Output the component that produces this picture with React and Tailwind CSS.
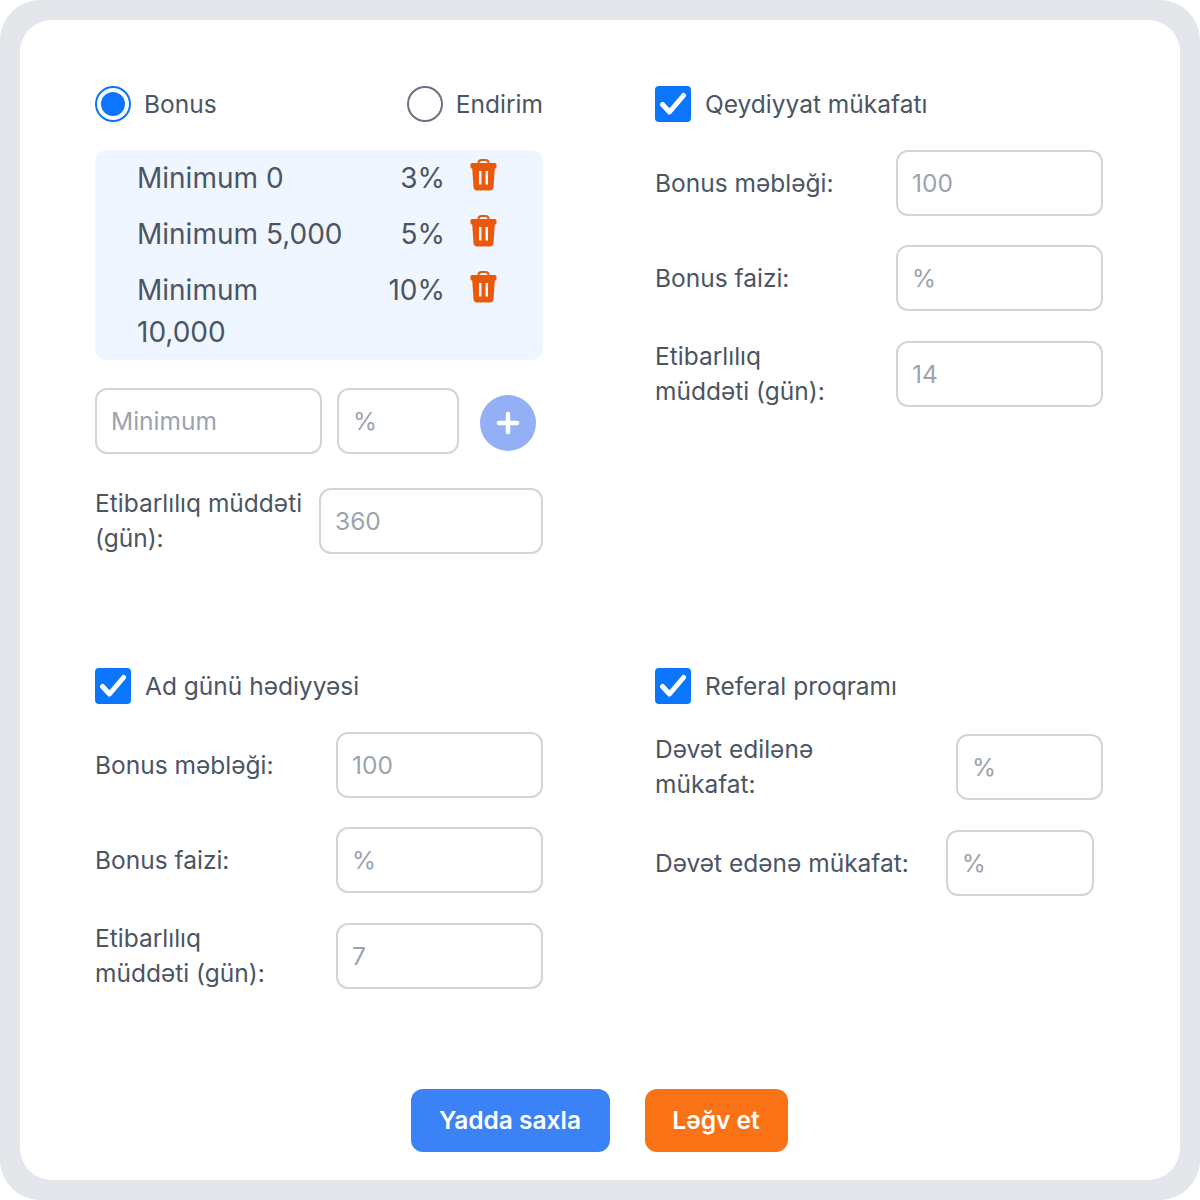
import React from 'react';

const TextInput = ({ placeholder, className = '' }) => (
  <input
    placeholder={placeholder}
    readOnly
    className={`h-[66px] shrink-0 rounded-[12px] border-2 border-[#d1d5db] bg-white pl-[14px] text-[24.5px] outline-none placeholder:text-[#9ca3af] ${className}`}
  />
);

const Checkbox = ({ label }) => (
  <label className="flex h-9 items-center gap-[14px]">
    <span className="flex h-9 w-9 items-center justify-center rounded-[4px] bg-[#0b76fb]">
      <svg width="28" height="26" viewBox="0 0 28 26" fill="none">
        <path d="M3.5 13.5 L10.5 21 L24.5 4.5" stroke="white" strokeWidth="5" strokeLinecap="round" strokeLinejoin="round" />
      </svg>
    </span>
    <span className="text-[24.5px] text-[#4b5563]">{label}</span>
  </label>
);

const Radio = ({ label, checked }) => (
  <label className="flex h-9 items-center gap-[13px]">
    {checked ? (
      <span className="flex h-9 w-9 items-center justify-center rounded-full border-2 border-[#0b76fb]">
        <span className="h-[24px] w-[24px] rounded-full bg-[#0b76fb]"></span>
      </span>
    ) : (
      <span className="h-9 w-9 rounded-full border-2 border-[#6b7280]"></span>
    )}
    <span className="text-[24.5px] text-[#4b5563]">{label}</span>
  </label>
);

const TrashIcon = () => (
  <svg width="27" height="32" viewBox="0 0 27 32" className="shrink-0">
    <path d="M8.5 5 V4 Q8.5 1 11.5 1 H15.5 Q18.5 1 18.5 4 V5" fill="none" stroke="#ea580c" strokeWidth="2" />
    <path
      fillRule="evenodd"
      fill="#ea580c"
      d="M2 4 H25 Q26.5 4 26.5 5.5 V8 Q26.5 9.5 25 9.5 H24.8 L23.5 28 Q23.2 31.5 19.8 31.5 H7.2 Q3.8 31.5 3.5 28 L2.2 9.5 H2 Q0.5 9.5 0.5 8 V5.5 Q0.5 4 2 4 Z M9 12 V25.5 H11.5 V12 Z M15.5 12 V25.5 H18 V12 Z"
    />
  </svg>
);

const TierRow = ({ min, percent }) => (
  <div className="flex items-start">
    <div className="w-[240px] shrink-0 text-[28px] leading-[42px] text-[#4b5563]">{min}</div>
    <div className="w-[68px] shrink-0 text-right text-[28px] leading-[42px] text-[#4b5563]">{percent}</div>
    <div className="ml-[25px] mt-[2px]">
      <TrashIcon />
    </div>
  </div>
);

const Field = ({ label, placeholder, inputClass, className = '' }) => (
  <div className={`flex items-center justify-between ${className}`}>
    <span className="text-[24.5px] leading-[35px] text-[#4b5563]">{label}</span>
    <TextInput placeholder={placeholder} className={inputClass} />
  </div>
);

export default function App() {
  return (
    <div className="h-[1200px] w-[1200px] rounded-[40px] bg-[#e3e7ec] p-5 font-['Inter',sans-serif]">
      <div className="flex h-[1160px] flex-col rounded-[32px] bg-white pl-[75px] pr-[77px] pt-[66px]">
        <div className="grid grid-cols-[448px_448px] justify-between">
          {/* Bonus / Endirim */}
          <div className="h-[582px]">
            <div className="flex items-center justify-between">
              <Radio label="Bonus" checked />
              <Radio label="Endirim" />
            </div>
            <div className="mt-7 flex h-[210px] flex-col gap-[14px] rounded-[12px] bg-[#eff6ff] pl-[42px] pt-[7px]">
              <TierRow min="Minimum 0" percent="3%" />
              <TierRow min="Minimum 5,000" percent="5%" />
              <TierRow min={<>Minimum<br />10,000</>} percent="10%" />
            </div>
            <div className="mt-7 flex items-start">
              <TextInput placeholder="Minimum" className="w-[227px]" />
              <TextInput placeholder="%" className="ml-[15px] w-[122px]" />
              <button className="ml-[21px] mt-[7px] flex h-14 w-14 items-center justify-center rounded-full bg-[#93aff5]">
                <svg width="24" height="24" viewBox="0 0 24 24" fill="none">
                  <path d="M12 3 V21 M3 12 H21" stroke="white" strokeWidth="4.5" strokeLinecap="round" />
                </svg>
              </button>
            </div>
            <Field
              className="mt-8"
              label={<>Etibarlılıq müddəti<br />(gün):</>}
              placeholder="360"
              inputClass="w-[224px]"
            />
          </div>

          {/* Qeydiyyat */}
          <div>
            <Checkbox label="Qeydiyyat mükafatı" />
            <Field className="mt-7" label="Bonus məbləği:" placeholder="100" inputClass="w-[207px]" />
            <Field className="mt-[29px]" label="Bonus faizi:" placeholder="%" inputClass="w-[207px]" />
            <Field className="mt-7" label={<>Etibarlılıq<br />müddəti (gün):</>} placeholder="14" inputClass="w-[207px]" />
          </div>

          {/* Ad günü */}
          <div>
            <Checkbox label="Ad günü hədiyyəsi" />
            <Field className="mt-7" label="Bonus məbləği:" placeholder="100" inputClass="w-[207px]" />
            <Field className="mt-[29px]" label="Bonus faizi:" placeholder="%" inputClass="w-[207px]" />
            <Field className="mt-7" label={<>Etibarlılıq<br />müddəti (gün):</>} placeholder="7" inputClass="w-[207px]" />
          </div>

          {/* Referal */}
          <div>
            <Checkbox label="Referal proqramı" />
            <Field className="mt-7" label={<>Dəvət edilənə<br />mükafat:</>} placeholder="%" inputClass="w-[147px]" />
            <div className="mt-7 flex items-center gap-[37px]">
              <span className="text-[24.5px] leading-[35px] text-[#4b5563]">Dəvət edənə mükafat:</span>
              <TextInput placeholder="%" className="w-[148px]" />
            </div>
          </div>
        </div>

        <div className="mt-[98px] flex justify-center gap-[35px]">
          <button className="h-[63px] w-[199px] rounded-[12px] bg-[#3b82f6] text-[24.5px] font-semibold text-white">Yadda saxla</button>
          <button className="h-[63px] w-[143px] rounded-[12px] bg-[#f97316] text-[24.5px] font-semibold text-white">Ləğv et</button>
        </div>
      </div>
    </div>
  );
}
